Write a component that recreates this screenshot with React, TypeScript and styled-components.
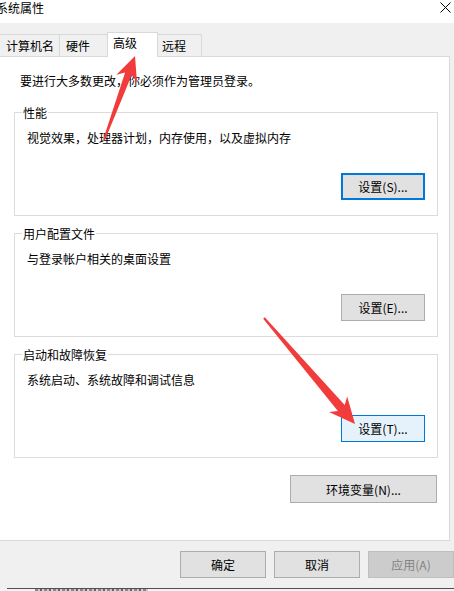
import React from "react";
import styled, { createGlobalStyle, css } from "styled-components";

const GlobalStyle = createGlobalStyle`
  html, body { margin: 0; padding: 0; background: #ffffff; }
  body {
    font-family: "Noto Sans CJK SC", "Microsoft YaHei", sans-serif;
    font-size: 12px;
    color: #000;
  }
  * { box-sizing: border-box; }
`;

const Window = styled.div`
  position: relative;
  width: 454px;
  height: 591px;
  overflow: hidden;
  display: flex;
  flex-direction: column;
  background: #f0f0f0;
`;

const TitleBar = styled.div`
  height: 23px;
  flex: none;
  background: #ffffff;
  display: flex;
  justify-content: space-between;
  align-items: flex-start;
  padding-top: 1px;
`;

const Title = styled.span`
  margin-left: -4px;
  line-height: 14px;
  font-size: 12px;
`;

const CloseIcon = styled.svg`
  width: 11px;
  height: 11px;
  margin-top: 1px;
  margin-right: 3px;
`;

const TabBar = styled.div`
  height: 33px;
  flex: none;
  display: flex;
  align-items: flex-end;
  margin-left: -1px;
  position: relative;
  z-index: 1;
`;

const Tab = styled.div<{ $w: number; $pad: number; $active?: boolean; $first?: boolean }>`
  width: ${(p) => p.$w}px;
  border: 1px solid #d9d9d9;
  border-bottom: none;
  padding-left: ${(p) => p.$pad}px;
  line-height: 14px;
  white-space: nowrap;
  margin-left: ${(p) => (p.$first ? 0 : -1)}px;
  ${(p) =>
    p.$active
      ? css`
          height: 25px;
          padding-top: 3px;
          background: #ffffff;
          margin-bottom: -1px;
          position: relative;
          z-index: 2;
        `
      : css`
          height: 22px;
          padding-top: 4px;
          background: #f0f0f0;
        `}
`;

const Panel = styled.div`
  height: 485px;
  flex: none;
  margin-left: -1px;
  margin-right: 4px;
  background: #ffffff;
  border: 1px solid #d9d9d9;
  padding: 17px 11px 0 14px;
  display: flex;
  flex-direction: column;
`;

const Intro = styled.div`
  margin-left: 6px;
  line-height: 14px;
  white-space: nowrap;
`;

const Group = styled.fieldset<{ $first?: boolean }>`
  margin: ${(p) => (p.$first ? 17 : 10)}px 0 0 0;
  padding: 0 12px 15px 12px;
  border: 1px solid #dcdcdc;
  min-width: 0;
`;

const GroupLegend = styled.legend`
  margin-left: -5px;
  padding: 0 1px;
  line-height: 15px;
  font-size: 12px;
`;

const GroupBody = styled.div`
  display: flex;
  flex-direction: column;
`;

const Description = styled.div`
  margin-top: 11px;
  line-height: 14px;
  white-space: nowrap;
`;

type Variant = "normal" | "default" | "hover" | "disabled";

const WinButton = styled.button<{ $variant?: Variant; $w: number; $h?: number }>`
  width: ${(p) => p.$w}px;
  height: ${(p) => p.$h ?? 27}px;
  flex: none;
  font-family: inherit;
  font-size: 12px;
  line-height: 14px;
  padding: 1px 0 0 0;
  margin: 0;
  color: #000;
  background: #e1e1e1;
  border: 1px solid #adadad;
  border-radius: 0;
  white-space: nowrap;
  ${(p) =>
    p.$variant === "default" &&
    css`
      border: 2px solid #0078d7;
    `}
  ${(p) =>
    p.$variant === "hover" &&
    css`
      background: #e5f1fb;
      border: 1px solid #0078d7;
    `}
  ${(p) =>
    p.$variant === "disabled" &&
    css`
      background: #cccccc;
      border: 1px solid #bfbfbf;
      color: #838383;
    `}
`;

const GroupButton = styled(WinButton)`
  align-self: flex-end;
  margin-top: 28px;
`;

const EnvButton = styled(WinButton)`
  align-self: flex-end;
  margin-top: 17px;
  margin-right: 1px;
`;

const Footer = styled.div`
  height: 47px;
  flex: none;
  display: flex;
  justify-content: flex-end;
  align-items: flex-start;
  gap: 8px;
  padding-top: 10px;
`;

const BottomEdge = styled.div`
  height: 3px;
  flex: none;
  display: flex;
  flex-direction: column;
  background: #f3f3f3;
`;

const EdgeLine = styled.div`
  margin-left: 7px;
  height: 1px;
  background: #505050;
`;

const EdgeSmudge = styled.div`
  margin-left: 35px;
  width: 113px;
  height: 2px;
  background: repeating-linear-gradient(90deg, #7f8a98 0 3px, #c9c9c9 3px 5px, #5f6670 5px 7px, #d8d8d8 7px 9px);
`;

const Overlay = styled.svg`
  position: absolute;
  left: 0;
  top: 0;
  width: 454px;
  height: 591px;
  pointer-events: none;
  z-index: 5;
`;

type Pt = [number, number];

function arrowPoints(tail: Pt, tip: Pt, headLen: number, headHalf: number, shaftHalf: number, tailHalf: number) {
  const dx = tip[0] - tail[0];
  const dy = tip[1] - tail[1];
  const len = Math.hypot(dx, dy);
  const ux = dx / len;
  const uy = dy / len;
  const px = -uy;
  const py = ux;
  const bx = tip[0] - ux * headLen;
  const by = tip[1] - uy * headLen;
  const bx2 = tip[0] - ux * (headLen - 5);
  const by2 = tip[1] - uy * (headLen - 5);
  const pts: Pt[] = [
    tip,
    [bx + px * headHalf, by + py * headHalf],
    [bx2 + px * shaftHalf, by2 + py * shaftHalf],
    [tail[0] + px * tailHalf, tail[1] + py * tailHalf],
    [tail[0] - px * tailHalf, tail[1] - py * tailHalf],
    [bx2 - px * shaftHalf, by2 - py * shaftHalf],
    [bx - px * headHalf, by - py * headHalf],
  ];
  return pts.map((p) => `${p[0].toFixed(1)},${p[1].toFixed(1)}`).join(" ");
}

const groups = [
  { legend: "性能", desc: "视觉效果，处理器计划，内存使用，以及虚拟内存", button: "设置(S)...", variant: "default" as Variant },
  { legend: "用户配置文件", desc: "与登录帐户相关的桌面设置", button: "设置(E)...", variant: "normal" as Variant },
  { legend: "启动和故障恢复", desc: "系统启动、系统故障和调试信息", button: "设置(T)...", variant: "hover" as Variant },
];

const tabs = [
  { label: "计算机名", w: 61, pad: 6 },
  { label: "硬件", w: 49, pad: 6 },
  { label: "高级", w: 51, pad: 5, active: true },
  { label: "远程", w: 45, pad: 4 },
];

export default function App() {
  return (
    <>
      <GlobalStyle />
      <Window>
        <TitleBar>
          <Title>系统属性</Title>
          <CloseIcon viewBox="0 0 11 11">
            <path d="M0.5 0.5 L10.5 10.5 M10.5 0.5 L0.5 10.5" stroke="#000" strokeWidth="1" fill="none" />
          </CloseIcon>
        </TitleBar>
        <TabBar>
          {tabs.map((t, i) => (
            <Tab key={t.label} $w={t.w} $pad={t.pad} $active={t.active} $first={i === 0}>
              {t.label}
            </Tab>
          ))}
        </TabBar>
        <Panel>
          <Intro>要进行大多数更改，你必须作为管理员登录。</Intro>
          {groups.map((g, i) => (
            <Group key={g.legend} $first={i === 0}>
              <GroupLegend>{g.legend}</GroupLegend>
              <GroupBody>
                <Description>{g.desc}</Description>
                <GroupButton $variant={g.variant} $w={84}>
                  {g.button}
                </GroupButton>
              </GroupBody>
            </Group>
          ))}
          <EnvButton $w={147} $h={28}>
            环境变量(N)...
          </EnvButton>
        </Panel>
        <Footer>
          <WinButton $w={86}>确定</WinButton>
          <WinButton $w={86}>取消</WinButton>
          <WinButton $w={86} $variant="disabled">
            应用(A)
          </WinButton>
        </Footer>
        <BottomEdge>
          <EdgeLine />
          <EdgeSmudge />
        </BottomEdge>
        <Overlay viewBox="0 0 454 591">
          <polygon points={arrowPoints([104, 140], [135, 56], 24, 11, 3.5, 1)} fill="#f23c3c" />
          <polygon points={arrowPoints([264, 318], [355, 424], 26, 12, 4.5, 1)} fill="#f23c3c" />
        </Overlay>
      </Window>
    </>
  );
}
